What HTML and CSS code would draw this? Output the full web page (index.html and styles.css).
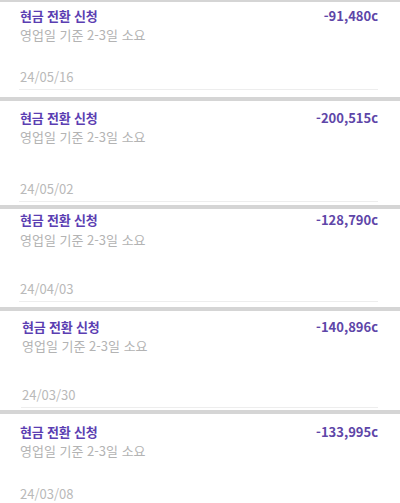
FILE: index.html
```html
<!DOCTYPE html>
<html lang="ko">
<head>
    <meta charset="UTF-8">
    <meta name="viewport" content="width=device-width, initial-scale=1.0">
    <title>현금 전환 내역</title>
    <link rel="stylesheet" href="styles.css">
</head>
<body>
    <div class="history">
        <div class="bar bar-first"></div>

        <div class="entry entry-1">
            <div class="entry-body">
                <div class="entry-top">
                    <span class="entry-title">현금 전환 신청</span>
                    <span class="entry-amount">-91,480c</span>
                </div>
                <div class="entry-desc">영업일 기준 2-3일 소요</div>
                <div class="entry-date">24/05/16</div>
            </div>
        </div>
        <div class="bar"></div>

        <div class="entry entry-2">
            <div class="entry-body">
                <div class="entry-top">
                    <span class="entry-title">현금 전환 신청</span>
                    <span class="entry-amount">-200,515c</span>
                </div>
                <div class="entry-desc">영업일 기준 2-3일 소요</div>
                <div class="entry-date">24/05/02</div>
            </div>
        </div>
        <div class="bar"></div>

        <div class="entry entry-3">
            <div class="entry-body">
                <div class="entry-top">
                    <span class="entry-title">현금 전환 신청</span>
                    <span class="entry-amount">-128,790c</span>
                </div>
                <div class="entry-desc">영업일 기준 2-3일 소요</div>
                <div class="entry-date">24/04/03</div>
            </div>
        </div>
        <div class="bar"></div>

        <div class="entry entry-4">
            <div class="entry-body">
                <div class="entry-top">
                    <span class="entry-title">현금 전환 신청</span>
                    <span class="entry-amount">-140,896c</span>
                </div>
                <div class="entry-desc">영업일 기준 2-3일 소요</div>
                <div class="entry-date">24/03/30</div>
            </div>
        </div>
        <div class="bar"></div>

        <div class="entry entry-5">
            <div class="entry-body no-line">
                <div class="entry-top">
                    <span class="entry-title">현금 전환 신청</span>
                    <span class="entry-amount">-133,995c</span>
                </div>
                <div class="entry-desc">영업일 기준 2-3일 소요</div>
                <div class="entry-date">24/03/08</div>
            </div>
        </div>
    </div>
</body>
</html>
```

FILE: styles.css
```css
/* 현금 전환 내역 */
* {
    box-sizing: border-box;
    margin: 0;
    padding: 0;
}

body {
    background-color: #fff;
    font-family: 'Noto Sans CJK KR', 'Noto Sans', sans-serif;
    width: 400px;
    height: 503px;
    overflow: hidden;
}

.history {
    display: flex;
    flex-direction: column;
}

.bar {
    height: 4px;
    background-color: #d5d5d5;
    flex-shrink: 0;
}

.bar-first {
    height: 2px;
}

.entry {
    background-color: #fff;
    padding: 0 22px 0 19px;
    flex-shrink: 0;
}

.entry-body {
    border-bottom: 1px solid #ededed;
    padding-bottom: 2px;
}

.no-line {
    border-bottom: none;
}

.entry-top {
    display: flex;
    justify-content: space-between;
    align-items: center;
    height: 20px;
    padding-left: 1px;
}

.entry-title {
    font-size: 13px;
    font-weight: 700;
    color: #5b3eb2;
    letter-spacing: -0.2px;
}

.entry-amount {
    font-size: 13px;
    font-weight: 700;
    color: #5e46a8;
}

.entry-desc {
    font-size: 13px;
    line-height: 20px;
    color: #b3b3b3;
    padding-left: 1px;
}

.entry-date {
    font-size: 13px;
    line-height: 20px;
    color: #b9b9b9;
    padding-left: 1px;
}

/* 각 항목마다 간격이 조금씩 다름 */
.entry-1 {
    height: 95px;
    padding-top: 3px;
}

.entry-1 .entry-date {
    margin-top: 22px;
}

.entry-2 {
    height: 104px;
    padding-top: 6px;
}

.entry-2 .entry-date {
    margin-top: 32px;
}

.entry-3 {
    height: 98px;
    padding-top: 0;
}

.entry-3 .entry-desc {
    margin-top: 1px;
}

.entry-3 .entry-date {
    margin-top: 29px;
}

.entry-4 {
    height: 99px;
    padding-top: 5px;
    padding-left: 21px;
}

.entry-4 .entry-date {
    margin-top: 29px;
}

.entry-5 {
    height: 89px;
    padding-top: 7px;
}

.entry-5 .entry-date {
    margin-top: 23px;
}
```
